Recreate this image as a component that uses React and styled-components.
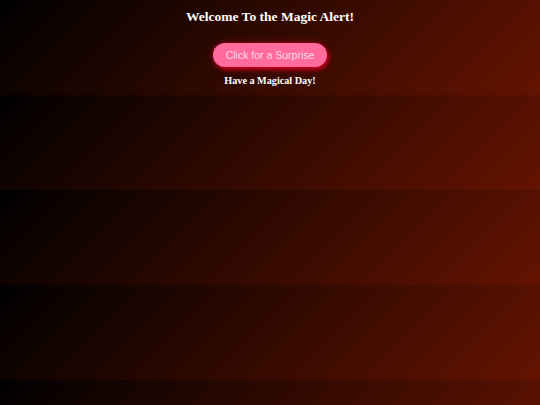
import React from "react";
import styled, { createGlobalStyle } from "styled-components";

const GlobalStyle = createGlobalStyle`
  html {
    background: linear-gradient(135deg, #000000, #641300);
    background-size: 100% 95px;
    background-repeat: repeat;
  }
  body {
    margin: 0;
    font-family: "Liberation Serif", "Times New Roman", serif;
  }
`;

const Page = styled.main`
  display: flex;
  flex-direction: column;
  align-items: center;
  padding-top: 9px;
  height: 95px;
  box-sizing: border-box;
`;

const Title = styled.h1`
  margin: 0;
  font-size: 13.5px;
  line-height: 16px;
  font-weight: bold;
  color: #ffffff;
`;

const SurpriseButton = styled.button`
  margin-top: 18px;
  height: 24px;
  padding: 0 13px;
  border: none;
  border-radius: 12px;
  background: #ff6b9b;
  color: #ffdbe7;
  font-family: "Liberation Sans", Arial, sans-serif;
  font-size: 10.5px;
  box-shadow: 0 0 6px rgba(255, 0, 50, 0.55), 2px 3px 4px rgba(210, 0, 30, 0.75);
  cursor: pointer;
`;

const Tagline = styled.p`
  margin: 8px 0 0;
  font-size: 10.2px;
  line-height: 12px;
  font-weight: bold;
  color: #ffffff;
`;

export default function App() {
  return (
    <>
      <GlobalStyle />
      <Page>
        <Title>Welcome To the Magic Alert!</Title>
        <SurpriseButton>Click for a Surprise</SurpriseButton>
        <Tagline>Have a Magical Day!</Tagline>
      </Page>
    </>
  );
}
